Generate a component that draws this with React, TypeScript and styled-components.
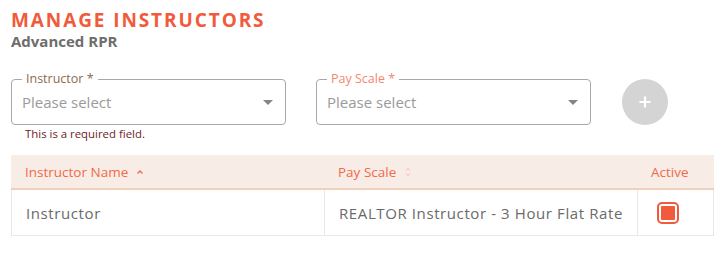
import React from "react";
import styled, { createGlobalStyle } from "styled-components";

const Global = createGlobalStyle`
  html, body { margin: 0; padding: 0; background: #fff; }
  body { font-family: "Open Sans", "DejaVu Sans", sans-serif; }
  * { box-sizing: border-box; }
`;

const Page = styled.div`
  width: 727px;
  height: 257px;
  padding: 10px 13px 0 11px;
`;

const Title = styled.h1`
  margin: 0;
  font-size: 19px;
  line-height: 20px;
  font-weight: 700;
  letter-spacing: 1.9px;
  color: #f15a3b;
`;

const Subtitle = styled.div`
  margin-top: 1px;
  font-size: 15px;
  line-height: 20px;
  font-weight: 700;
  color: #6d6d6d;
`;

const FormRow = styled.div`
  display: flex;
  align-items: flex-start;
  gap: 30px;
  margin-top: 28px;
`;

const Field = styled.div`
  width: 275px;
  display: flex;
  flex-direction: column;
`;

const SelectBox = styled.div`
  position: relative;
  height: 46px;
  border: 1px solid #a8a8a8;
  border-radius: 4px;
  padding: 0 12px 0 10px;
  display: flex;
  align-items: center;
  justify-content: space-between;
`;

const Legend = styled.span<{ $tone: "dark" | "light" }>`
  position: absolute;
  top: -9px;
  left: 10px;
  padding: 0 4px;
  background: #fff;
  font-size: 12.5px;
  line-height: 16px;
  color: ${(p) => (p.$tone === "dark" ? "#8d6a4e" : "#f4886f")};
`;

const Placeholder = styled.span`
  font-size: 15px;
  color: #9a9a9a;
`;

const Caret = styled.span`
  width: 0;
  height: 0;
  border-left: 5px solid transparent;
  border-right: 5px solid transparent;
  border-top: 5px solid #858585;
`;

const ErrorText = styled.div`
  margin-top: 1px;
  padding-left: 14px;
  font-size: 11.4px;
  line-height: 16px;
  color: #6e2424;
`;

const AddButton = styled.button`
  width: 46px;
  height: 46px;
  border-radius: 50%;
  border: none;
  background: #d4d4d4;
  display: flex;
  align-items: center;
  justify-content: center;
  padding: 0;
  margin-left: 1px;
`;

const Table = styled.div`
  margin-top: 13px;
  width: 703px;
  display: grid;
  grid-template-columns: 313px 313px 77px;
`;

const HeadCell = styled.div`
  height: 35px;
  background: #f7ede6;
  border-bottom: 2px solid #f0cfbb;
  display: flex;
  align-items: center;
  gap: 8px;
  padding-left: 14px;
  font-size: 13.5px;
  color: #f2694b;
`;

const Cell = styled.div<{ $last?: boolean }>`
  height: 46px;
  display: flex;
  align-items: center;
  padding-left: 14px;
  border-bottom: 1px solid #e8e8e8;
  border-left: 1px solid #e8e8e8;
  ${(p) => (p.$last ? "border-right: 1px solid #e8e8e8;" : "")}
  font-size: 15px;
  color: #6a6a6a;
  letter-spacing: 0.6px;
`;

const Check = styled.span`
  width: 22px;
  height: 22px;
  border: 2px solid #f15a3b;
  border-radius: 5px;
  padding: 2px;
  display: flex;
  margin-left: 5px;
  &::after {
    content: "";
    flex: 1;
    background: #f15a3b;
    border-radius: 1px;
  }
`;

const SortUp = () => (
  <svg width="8" height="6" viewBox="0 0 8 6">
    <path d="M1.5 4.5 L4 2 L6.5 4.5" fill="none" stroke="#f2694b" strokeWidth="1.4" />
  </svg>
);

const SortBoth = () => (
  <svg width="8" height="10" viewBox="0 0 8 10">
    <path d="M2 3.5 L4 1.5 L6 3.5 M2 6.5 L4 8.5 L6 6.5" fill="none" stroke="#f6b3a0" strokeWidth="1" />
  </svg>
);

export default function App() {
  return (
    <Page>
      <Global />
      <Title>MANAGE INSTRUCTORS</Title>
      <Subtitle>Advanced RPR</Subtitle>
      <FormRow>
        <Field>
          <SelectBox>
            <Legend $tone="dark">Instructor *</Legend>
            <Placeholder>Please select</Placeholder>
            <Caret />
          </SelectBox>
          <ErrorText>This is a required field.</ErrorText>
        </Field>
        <Field>
          <SelectBox>
            <Legend $tone="light">Pay Scale *</Legend>
            <Placeholder>Please select</Placeholder>
            <Caret />
          </SelectBox>
        </Field>
        <AddButton aria-label="Add">
          <svg width="14" height="14" viewBox="0 0 14 14">
            <path d="M7 1.5 V12.5 M1.5 7 H12.5" stroke="#fff" strokeWidth="2.2" />
          </svg>
        </AddButton>
      </FormRow>
      <Table>
        <HeadCell>
          Instructor Name <SortUp />
        </HeadCell>
        <HeadCell>
          Pay Scale <SortBoth />
        </HeadCell>
        <HeadCell>Active</HeadCell>
        <Cell>Instructor</Cell>
        <Cell>REALTOR Instructor - 3 Hour Flat Rate</Cell>
        <Cell $last>
          <Check />
        </Cell>
      </Table>
    </Page>
  );
}
